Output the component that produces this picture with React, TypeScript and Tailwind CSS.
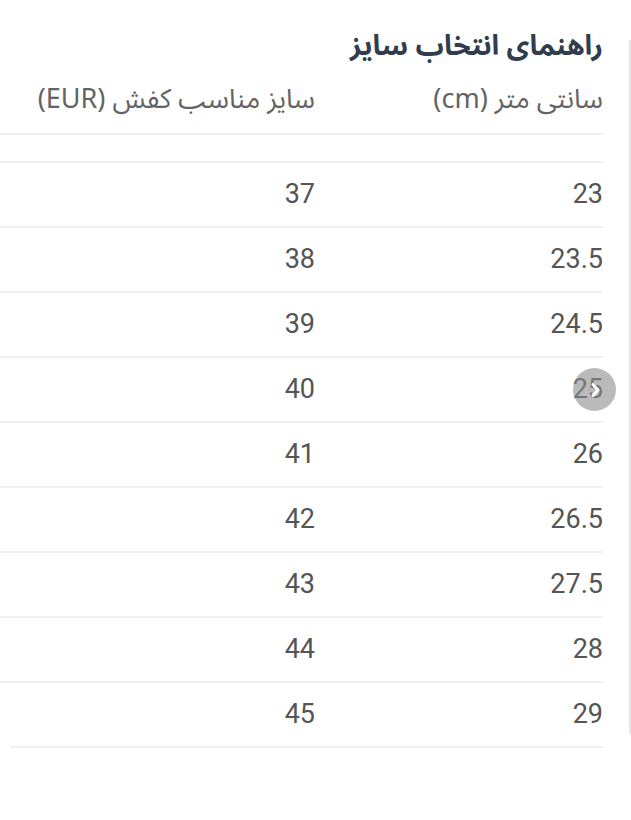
import React from 'react'

const SIZES = [
  { cm: '23', eur: '37' },
  { cm: '23.5', eur: '38' },
  { cm: '24.5', eur: '39' },
  { cm: '25', eur: '40' },
  { cm: '26', eur: '41' },
  { cm: '26.5', eur: '42' },
  { cm: '27.5', eur: '43' },
  { cm: '28', eur: '44' },
  { cm: '29', eur: '45' },
]

const fa = { fontFamily: '"Noto Sans Arabic", "DejaVu Sans", "Noto Sans", sans-serif' }
const num = { fontFamily: 'Roboto, "Liberation Sans", sans-serif' }

export default function App() {
  return (
    <div dir="rtl" className="relative flex w-[631px] h-[820px] bg-white overflow-hidden">
      {/* scroll edge on the right */}
      <div className="w-[2px] shrink-0 mt-[40px] h-[694px] bg-[#e6e6e6]" />

      <div className="flex-1 pr-[26px] pt-[28px]">
        <h1 className="h-[38px] leading-[38px] text-[28px] font-bold text-[#2f3d4f]" style={fa}>
          راهنمای انتخاب سایز
        </h1>

        <div className="-ml-[2px]">
          <div className="flex h-[69px] items-center border-b-2 border-[#f0f0f0] text-[27px] leading-[36px] text-[#636363]" style={fa}>
            <div className="w-[288px]">سانتی متر (cm)</div>
            <div className="flex-1">سایز مناسب کفش (EUR)</div>
          </div>
          <div className="h-[28px] border-b-2 border-[#f0f0f0]" />

          {SIZES.map((row, i) => (
            <div
              key={i}
              className={`flex h-[65px] items-center border-b-2 border-[#f0f0f0] text-[27px] text-[#555] ${i === SIZES.length - 1 ? 'ml-[12px]' : ''}`}
              style={num}
            >
              <div className="w-[288px]">{row.cm}</div>
              <div className="flex-1">{row.eur}</div>
            </div>
          ))}
        </div>
      </div>

      {/* horizontal scroll hint */}
      <div dir="ltr" className="absolute left-[573px] top-[368px] w-[43px] h-[43px] rounded-full bg-[#8c8c8c]/60 flex items-center justify-center">
        <svg width="18" height="18" viewBox="0 0 18 18" fill="none">
          <path d="M7 3.5 L12 9 L7 14.5" stroke="white" strokeWidth="3" strokeLinecap="round" strokeLinejoin="round" />
        </svg>
      </div>
    </div>
  )
}
